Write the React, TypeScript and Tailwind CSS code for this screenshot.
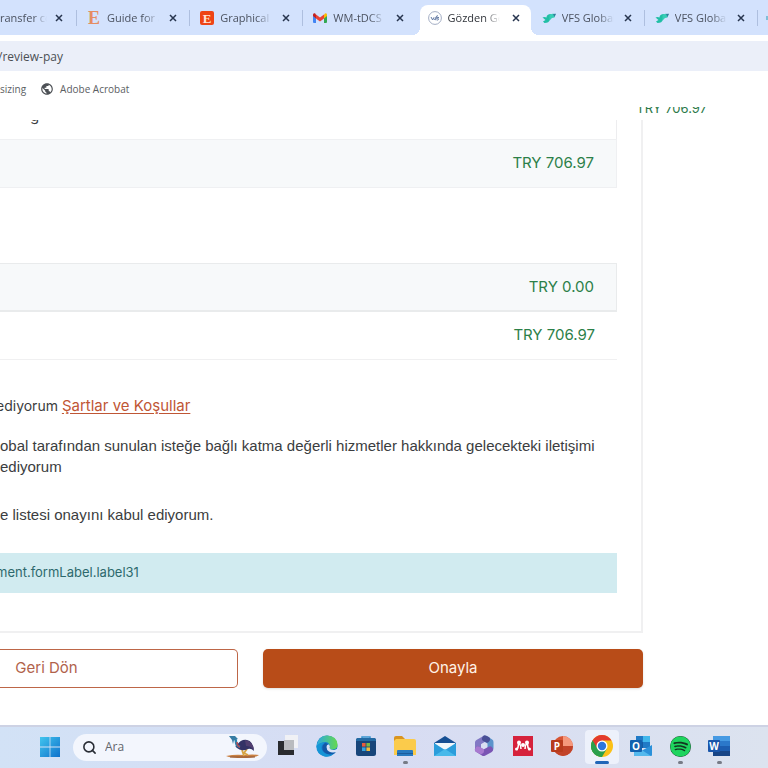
import type { ReactNode } from 'react';
import { Search } from 'lucide-react';
import { FaSpotify } from 'react-icons/fa';
import { MdPublic } from 'react-icons/md';

const CloseIcon = () => (
    <svg viewBox="0 0 8 8" className="size-2" stroke="currentColor" strokeWidth="1.5">
        <path d="M1 1l6 6M7 1L1 7" />
    </svg>
);

const EtsyIcon = ({ filled = false }: { filled?: boolean }) => (
    <span
        className={
            filled
                ? 'flex size-3.5 items-center justify-center rounded-xs bg-[#ee4415] font-["Liberation_Serif",serif] text-[13px] leading-none font-bold text-[#ffe5d8]'
                : 'flex size-3.5 items-center justify-center font-["Liberation_Serif",serif] text-[18px] leading-none font-bold text-[#e58d62]'
        }
    >
        E
    </span>
);

const GmailIcon = () => (
    <svg viewBox="0 0 14 14" className="size-3.5">
        <path d="M0 3.5V11q0 1 1 1h2V5.5z" fill="#4285f4" />
        <path d="M14 3.5V11q0 1-1 1h-2V5.5z" fill="#34a853" />
        <path d="M11 3.4L12 2.4q2-.8 2 1.3V5l-3 2.4z" fill="#fbbc04" />
        <path d="M3 3.4L7 6.5l4-3.1v4L7 10.5 3 7.4z" fill="#ea4335" />
        <path d="M0 3.7Q0 1.6 2 2.3l1 1.1v4L0 5z" fill="#c5221f" />
    </svg>
);

const VfsSealIcon = () => (
    <svg viewBox="0 0 14 14" className="size-3.5" fill="none">
        <circle cx="7" cy="7" r="6.4" fill="#fff" stroke="#9aa5bd" strokeWidth=".9" />
        <path d="M3 6l1.6 3L6 6.3M6 8q2 2 2-1 0-2.5 2-2.3M7 7h3M11 6.5q-2-.5-1.500.7 1.700.6.8 1.500-.7.6-1.800.1" stroke="#6179a3" strokeWidth="1" />
    </svg>
);

const VfsIcon = () => (
    <svg viewBox="0 0 14 14" className="size-3.5">
        <path d="M.5 6.500Q2.500 5.500 4.500 6.500q0-3.500 4.500-3.500L8 8.500Q7 12 2.500 12L1 10.500 3.500 9z" fill="#20bfa5" />
        <path d="M7.500 4.500Q8.500 2.700 11 2.800L13.500 3 12.500 6.500 10 7 7.500 9.500z" fill="#36cdb5" />
        <path d="M11 3l3-.3L12.500 6z" fill="#327c9b" />
    </svg>
);

const tabs: { title: string; icon: ReactNode; active?: boolean; line?: boolean }[] = [
    { title: 'Guide for a', icon: <EtsyIcon />, line: true },
    { title: 'Graphical A', icon: <EtsyIcon filled />, line: true },
    { title: 'WM-tDCS', icon: <GmailIcon /> },
    { title: 'Gözden Ge', icon: <VfsSealIcon />, active: true },
    { title: 'VFS Global', icon: <VfsIcon />, line: true },
    { title: 'VFS Global', icon: <VfsIcon />, line: true },
];

function TabStrip() {
    return (
        <nav className="flex h-[35px] overflow-hidden bg-[#d3e2fd] pt-[5px] text-[11px] text-[#4b5260]">
            <div className="flex h-[26px] w-[77px] shrink-0 items-center justify-between">
                <span className="w-[47px] overflow-hidden whitespace-nowrap mask-r-from-70%">ransfer co</span>
                <button aria-label="Close tab" className="ml-auto pr-[13px] text-[#27354f]">
                    <CloseIcon />
                </button>
                <span className="h-4 w-px bg-[#aebfdf]" />
            </div>
            {tabs.map((tab, i) => (
                <div
                    key={i}
                    className={
                        tab.active
                            ? 'relative mr-px ml-[3px] min-w-0 flex-1 rounded-t-lg bg-white pl-2 text-[#30343a]'
                            : 'min-w-0 flex-1 pl-2.5'
                    }
                >
                    <div className="flex h-[26px] items-center">
                        {tab.icon}
                        <span className="ml-1.5 w-[52px] overflow-hidden whitespace-nowrap mask-r-from-70%">
                            {tab.title}
                        </span>
                        <button
                            aria-label={`Close ${tab.title}`}
                            className={tab.active ? 'ml-auto pr-2.5 text-[#27354f]' : 'ml-auto pr-3 text-[#27354f]'}
                        >
                            <CloseIcon />
                        </button>
                        <span className={tab.line ? 'h-4 w-px bg-[#aebfdf]' : 'w-px'} />
                    </div>
                    {tab.active && (
                        <>
                            <span className="absolute bottom-0 -left-2 size-2 bg-[radial-gradient(circle_at_0_0,#d3e2fd_8px,white_8px)]" />
                            <span className="absolute -right-2 bottom-0 size-2 bg-[radial-gradient(circle_at_100%_0,#d3e2fd_8px,white_8px)]" />
                        </>
                    )}
                </div>
            ))}
            <div className="flex h-[26px] w-2.5 shrink-0 items-center justify-end">
                <span className="h-1 w-0.5 bg-[#7fbfd8]" />
            </div>
        </nav>
    );
}

const StartIcon = () => (
    <svg viewBox="0 0 22 22" className="size-[22px]">
        <defs>
            <linearGradient id="start" x1="0" y1="0" x2="1" y2="1">
                <stop offset="0" stopColor="#42c5ee" />
                <stop offset="1" stopColor="#0f72cc" />
            </linearGradient>
        </defs>
        <path d="M1 1h9.600v9.600H1zM11.400 1H21v9.600h-9.600zM1 11.400h9.600V21H1zM11.400 11.400H21V21h-9.600z" fill="url(#start)" />
    </svg>
);

const CassowaryIcon = () => (
    <svg viewBox="0 0 36 24" className="h-6 w-9">
        <path d="M1 21q9-2 18-1 9-1 15 0-4 3-16 3-12 0-17-2z" fill="#c98143" />
        <path d="M5 22h25" stroke="#8c5337" strokeWidth="1" />
        <path d="M17 15l2 6M22 14l-3 4 4 2" stroke="#d7a443" strokeWidth="1.8" fill="none" />
        <path d="M12 10q4-6 10-5 6 1 7 11-3-3-6-2-6 3-11-1-3-2 0-3z" fill="#343266" />
        <path d="M20 5q8 1 9 10-3-4-8-4z" fill="#503e70" />
        <path d="M15 12q-4-1-4-5 0-4-4-4" stroke="#2e86ae" strokeWidth="2.5" fill="none" />
        <path d="M12 7q0 4 3 5" stroke="#b3484f" strokeWidth="1.5" fill="none" />
        <path d="M4 1h6l3 3-4 1-1 4-1-4z" fill="#367ca4" />
    </svg>
);

const TaskViewIcon = () => (
    <svg viewBox="0 0 24 24" className="size-6">
        <path d="M9 1h13v13H9z" fill="#f0f1f5" />
        <path d="M2 7h16v14H2z" fill="#292b2f" />
        <path d="M8 6h10v10H8z" fill="#b9bbbf" />
    </svg>
);

const EdgeIcon = () => (
    <svg viewBox="0 0 24 24" className="size-6">
        <defs>
            <linearGradient id="edgeTop" x1="0" x2="1">
                <stop offset="0" stopColor="#2aa9e2" />
                <stop offset="1" stopColor="#65d94e" />
            </linearGradient>
        </defs>
        <circle cx="12" cy="12" r="10.5" fill="#1679cb" />
        <path d="M2 10Q4 1.500 12 1.500q10 .5 10.500 9 0 5-5 5-3 0-3-2 1-5-4-5.500Q4 8 1.500 14z" fill="url(#edgeTop)" />
        <path d="M10 8.500Q5 11 7 16q3 6 12 3.500-4 4-9.500 3Q1 20 1.500 12q3-4 8.500-3.500z" fill="#1594d6" />
        <path d="M10 9q-5 4-1 9 4 4 10 1.500l2-1.500q-4 1-7-.5-3-2-1-4.500 0-4-3-4z" fill="#1458a6" />
        <path d="M11.500 13q0-3 2.500-2.500 1.500 1.500.5 3.500 1 2.500 5 2l3.500-1.500-.5 3q-5 2-8.500 0-2.500-1.500-2.500-4.500z" fill="#d9e2f5" />
    </svg>
);

const StoreIcon = () => (
    <svg viewBox="0 0 24 24" className="size-6">
        <path d="M8 6V3h8v3" stroke="#3794cf" strokeWidth="1.5" fill="none" />
        <rect x="2" y="4" width="20" height="18" rx="2.5" fill="#17457a" />
        <path d="M2 7V6q0-2 2-2h16q2 0 2 2v1z" fill="#236aa3" />
        <path d="M8 9h3.600v3.600H8z" fill="#e85c3d" />
        <path d="M12.400 9H16v3.600h-3.600z" fill="#7db843" />
        <path d="M8 13.400h3.600V17H8z" fill="#35a3df" />
        <path d="M12.400 13.400H16V17h-3.600z" fill="#f4bc3b" />
    </svg>
);

const FolderIcon = () => (
    <svg viewBox="0 0 24 24" className="size-6">
        <path d="M1 4q0-2 2-2h6l3 3v5H1z" fill="#d99420" />
        <path d="M3 5h18q2 0 2 2v14H1V7z" fill="#fbcb4b" />
        <path d="M5 16h14q1 0 1 1v5H4v-5q0-1 1-1z" fill="#2879bf" />
        <path d="M4 19.500h16" stroke="#1c5c9c" strokeWidth="1" />
    </svg>
);

const MailIcon = () => (
    <svg viewBox="0 0 24 24" className="size-6">
        <path d="M1 9l11-7 11 7v4H1z" fill="#164f93" />
        <path d="M2 9h20v7H2z" fill="#f1f7fb" />
        <path d="M1 9l11 7 11-7v13H1z" fill="#2b9ddb" />
        <path d="M1 22l11-7 11 7z" fill="#48b9ea" />
    </svg>
);

// three rounded ribbons folded into a ring
const CopilotIcon = () => (
    <svg viewBox="0 0 24 24" className="size-6" fill="none" strokeWidth="6" strokeLinejoin="round" strokeLinecap="round">
        <path d="M12 5L6 8.500V15" stroke="#8178c4" />
        <path d="M14 5l4.500 3V14" stroke="#5b93cb" />
        <path d="M6 15.500l5.500 3.500 6.500-3.500" stroke="#7a55b4" />
        <path d="M6 15.500l3 1.500" stroke="#a87ad0" />
        <path d="M13 4.500l2 1" stroke="#494f96" />
    </svg>
);

const MendeleyIcon = () => (
    <svg viewBox="0 0 24 24" className="size-6">
        <path d="M2 2h20v20H2z" fill="#d6223c" />
        <path d="M5.500 16q2-2 2-7M10 15q0-4-2-6M14 15q0-4 2-6M18.500 16q-2-2-2-7" stroke="#fff" strokeWidth="1.600" fill="none" />
        <circle cx="8" cy="8.500" r="2" fill="#fff" />
        <circle cx="16" cy="8.500" r="2" fill="#fff" />
        <circle cx="12" cy="11" r="2" fill="#fff" />
        <circle cx="5.500" cy="15" r="1.500" fill="#fff" />
        <circle cx="18.500" cy="15" r="1.500" fill="#fff" />
    </svg>
);

const ChromeIcon = () => (
    <svg viewBox="0 0 24 24" className="size-6">
        <circle cx="12" cy="12" r="11" fill="#fbc117" />
        <path d="M12 12L2.500 6.500A11 11 0 0 1 21.500 6.500H12z" fill="#e33b2e" />
        <path d="M12 12L2.500 6.500A11 11 0 0 0 12 23l5-8.500z" fill="#2b9f4c" />
        <path d="M12 12L7 14 2.500 6.500 12 6.500z" fill="#e33b2e" />
        <path d="M2.500 6.500l4.800 8.200L12 17.500 12 23A11 11 0 0 1 2.500 6.500z" fill="#2b9f4c" />
        <circle cx="12" cy="12" r="5.5" fill="#fff" />
        <circle cx="12" cy="12" r="4.2" fill="#2d76dc" />
    </svg>
);

const PowerPointIcon = () => (
    <svg viewBox="0 0 24 24" className="size-6">
        <circle cx="13" cy="12" r="10" fill="#d75332" />
        <path d="M13 2a10 10 0 0 1 10 10H13z" fill="#f5987c" />
        <path d="M3 12h20a10 10 0 0 1-20 0z" fill="#c24329" />
        <rect x="1" y="6" width="12" height="12" rx="1" fill="#b83b1d" />
        <text x="7" y="15.500" textAnchor="middle" fontSize="10" fontWeight="700" fill="#fff">P</text>
    </svg>
);

const OutlookIcon = () => (
    <svg viewBox="0 0 24 24" className="size-6">
        <path d="M7 2h14v12H7z" fill="#207ac6" />
        <path d="M14 2h7v6h-7z" fill="#41b7ec" />
        <path d="M7 8h7v6H7z" fill="#145ba4" />
        <path d="M5 21l18-10v10q0 1-1 1H6q-1 0-1-1z" fill="#2b91da" />
        <path d="M5 11l17 11H6q-1 0-1-1z" fill="#54b9ed" />
        <rect x="1" y="6" width="12" height="12" rx="1" fill="#1261ae" />
        <text x="7" y="15.500" textAnchor="middle" fontSize="10" fontWeight="700" fill="#fff">O</text>
    </svg>
);

const WordIcon = () => (
    <svg viewBox="0 0 24 24" className="size-6">
        <path d="M6 2h17v5H6z" fill="#469ae3" />
        <path d="M6 7h17v5H6z" fill="#2b78ca" />
        <path d="M6 12h17v5H6z" fill="#1c5db0" />
        <path d="M6 17h17v5H6z" fill="#174586" />
        <rect x="1" y="6" width="12" height="12" rx="1" fill="#1a56aa" />
        <text x="7" y="15.500" textAnchor="middle" fontSize="10" fontWeight="700" fill="#fff">W</text>
    </svg>
);

const apps: { name: string; icon: ReactNode; active?: boolean; running?: boolean }[] = [
    { name: 'Task view', icon: <TaskViewIcon /> },
    { name: 'Edge', icon: <EdgeIcon /> },
    { name: 'Store', icon: <StoreIcon /> },
    { name: 'Explorer', icon: <FolderIcon />, running: true },
    { name: 'Mail', icon: <MailIcon /> },
    { name: 'Copilot', icon: <CopilotIcon /> },
    { name: 'Mendeley', icon: <MendeleyIcon /> },
    { name: 'PowerPoint', icon: <PowerPointIcon /> },
    { name: 'Chrome', icon: <ChromeIcon />, active: true },
    { name: 'Outlook', icon: <OutlookIcon /> },
    { name: 'Spotify', icon: <FaSpotify className="size-[21px] rounded-full bg-[#123620] text-[#1ed45e]" />, running: true },
    { name: 'Word', icon: <WordIcon />, running: true },
];

function Taskbar() {
    return (
        <footer className="flex h-[43px] items-center border-t-2 border-[#cdd2e4] bg-linear-to-r from-[#d2e2f6] via-[#d7dcf3] to-[#dce3ef] pb-px pl-[39px]">
            <button aria-label="Start" className="mr-3">
                <StartIcon />
            </button>
            <label className="flex h-[27px] w-[194px] shrink-0 items-center gap-2 rounded-full bg-[#f3f6fd] pr-1.5 pl-[9px]">
                <Search size={15} strokeWidth={2.5} className="shrink-0 text-[#292d35]" />
                <input
                    aria-label="Ara"
                    placeholder="Ara"
                    className="min-w-0 flex-1 bg-transparent text-xs outline-none placeholder:text-[#62656c]"
                />
                <CassowaryIcon />
            </label>
            <div className="ml-px grid w-[471px] grid-cols-12">
                {apps.map((app) => (
                    <button key={app.name} aria-label={app.name} className="flex justify-center">
                        <span
                            className={
                                app.active
                                    ? 'flex h-[34px] w-[34px] flex-col items-center justify-between rounded-sm bg-[#edf1fb] pt-1'
                                    : 'flex h-[34px] w-[34px] flex-col items-center justify-between pt-1'
                            }
                        >
                            <span className="flex size-6 items-center justify-center">{app.icon}</span>
                            {app.active && <span className="h-[3px] w-3.5 rounded-full bg-[#1f66b8]" />}
                            {app.running && <span className="h-[3px] w-[5px] rounded-full bg-[#777b86]" />}
                        </span>
                    </button>
                ))}
            </div>
        </footer>
    );
}

export default function App() {
    return (
        <div className='flex min-h-screen flex-col overflow-hidden bg-white font-["Open_Sans",sans-serif]'>
            <TabStrip />
            <div className="mt-1.5 flex h-[30px] items-center bg-[#ebeff9] pt-0.5">
                <input
                    aria-label="Address"
                    defaultValue="/review-pay"
                    className="-ml-0.5 w-full bg-transparent text-xs text-[#4b4f55] outline-none"
                />
            </div>
            <div className="flex h-9 items-center gap-3.5 text-[10px] text-[#5b5e63]">
                <a href="#sizing">sizing</a>
                <a href="#acrobat" className="flex items-center gap-1.5">
                    <MdPublic size={14} className="text-[#4d5156]" />
                    Adobe Acrobat
                </a>
            </div>

            <main className="flex flex-1 flex-col font-[Inter,sans-serif] text-[15px] text-[#3b3d40]">
                <div className="flex h-[13px] items-end justify-end overflow-hidden pr-[61px] pb-0.5 text-[13px] text-[#2c7a49]">
                    <span className="leading-5">TRY 706.97</span>
                </div>
                <div className="pr-[125px]">
                    <section className="border-r-2 border-b-2 border-[#f0f0f1] pr-6 pb-[38px]">
                        <div className="flex h-[19px] items-start overflow-hidden border-r border-[#ededef] pl-[30px]">
                            <span className="-mt-3.5 leading-5">g</span>
                        </div>
                        <div className="flex h-[49px] items-center justify-end border border-l-0 border-[#eff0f2] bg-[#f7f9fa] pr-[22px] text-[#2c8048]">
                            TRY 706.97
                        </div>
                        <div className="mt-[75px] flex h-[49px] items-center justify-end border border-b-2 border-l-0 border-[#e9ebec] bg-[#f7f9fa] pr-[22px] text-[#2c8048]">
                            TRY 0.00
                        </div>
                        <div className="flex h-12 items-center justify-end border-b border-[#f0f0f1] pr-[22px] text-[#2c8048]">
                            TRY 706.97
                        </div>
                        <p className="mt-[35px] -ml-1 text-sm leading-[22px]">
                            ediyorum{' '}
                            <a href="#terms" className="text-[15px] text-[#bf5635] underline underline-offset-2">
                                Şartlar ve Koşullar
                            </a>
                        </p>
                        <div className='font-["Liberation_Sans",sans-serif] leading-[21px]'>
                            <p className="mt-[18px]">
                                obal tarafından sunulan isteğe bağlı katma değerli hizmetler hakkında gelecekteki iletişimi
                                <br />
                                ediyorum
                            </p>
                            <p className="mt-[27px]">e listesi onayını kabul ediyorum.</p>
                        </div>
                        <div className="mt-7 flex h-10 items-center bg-[#d1ebf0] text-[13px] text-[#2d696d]">
                            <span className="-ml-1">ment.formLabel.label31</span>
                        </div>
                    </section>
                    <div className="mt-4 flex gap-[25px] pb-9">
                        <button className="h-[39px] w-[238px] rounded-r-[5px] border border-l-0 border-[#bd6647] pr-36 text-[#b1624b]">
                            Geri Dön
                        </button>
                        <button className="h-[39px] flex-1 rounded-[5px] bg-[#b84c18] text-[#fff3e8] shadow-sm">
                            Onayla
                        </button>
                    </div>
                </div>
            </main>
            <Taskbar />
        </div>
    );
}
